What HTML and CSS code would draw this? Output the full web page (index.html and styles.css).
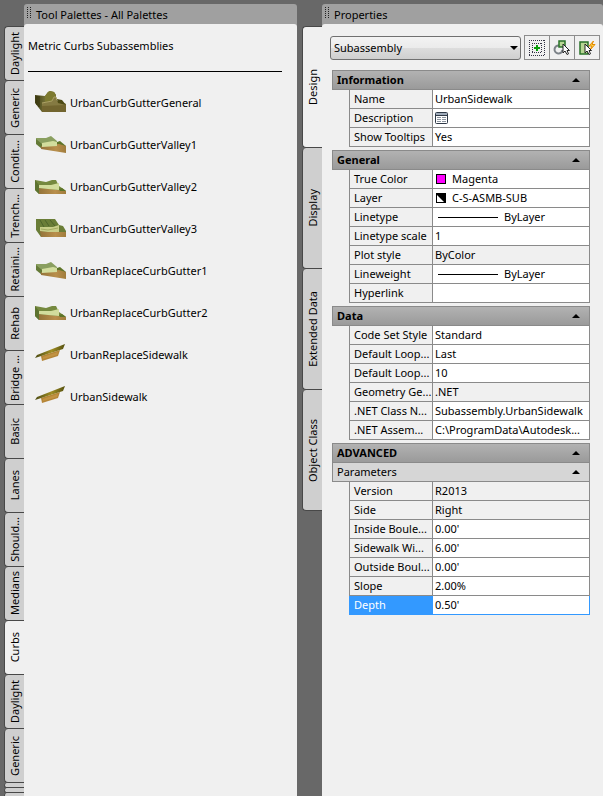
FILE: index.html
```html
<!DOCTYPE html>
<html lang="en">
<head>
<meta charset="utf-8">
<title>Tool Palettes and Properties</title>
<link rel="stylesheet" href="styles.css">
</head>
<body>
<svg class="defs" aria-hidden="true">
  <defs>
    <linearGradient id="olive" x1="0" y1="0" x2="1" y2="0"><stop offset="0" stop-color="#3f3d12"/><stop offset=".35" stop-color="#77743a"/><stop offset="1" stop-color="#5c5822"/></linearGradient>
    <linearGradient id="slab" x1="0" y1="0" x2="1" y2="0"><stop offset="0" stop-color="#4a4a12"/><stop offset=".55" stop-color="#a18e24"/><stop offset="1" stop-color="#54500f"/></linearGradient>
    <linearGradient id="earth" x1="0" y1="0" x2="1" y2="0"><stop offset="0" stop-color="#94743a"/><stop offset=".6" stop-color="#b98f4c"/><stop offset="1" stop-color="#a07c3c"/></linearGradient>
    <symbol id="general" viewBox="0 0 32 24">
      <path d="M0 4l10 1 3-4 2-1 4 1 2 3v5l10 4v8H7l-7-9z" fill="url(#olive)"/>
      <path d="M10 5l3-4 2-1 4 1 2 3-1 2-3 4-7 1z" fill="#7d7a30"/>
      <path d="M2 5v9M4 5v11" stroke="#35330c"/>
      <path d="M7 12l10-2 2-4h2l1 4 9 3v8H7z" fill="#857a42"/>
      <path d="M7 12l10-2 2-4h2l1 3" fill="none" stroke="#aaa064"/>
      <path d="M22 8l5 1 4 5-8-2z" fill="#4d4a15"/>
      <path d="M7 15l24-1v7H7z" fill="#72652f"/>
    </symbol>
    <symbol id="valley1" viewBox="0 0 32 24">
      <path d="M1 5l10 0 5-2 6 5v3L7 12 1 11z" fill="#8a9f60"/>
      <path d="M1 6l6 5v5l-6-5z" fill="#647a37"/>
      <path d="M22 9l3-1 6 5h-9z" fill="#5d7428"/>
      <path d="M6 13l18-2 7 2v7L6 16z" fill="url(#earth)"/>
      <path d="M7 10l11-2 4 1v4L7 14z" fill="#d2dd9d"/>
    </symbol>
    <symbol id="valley2" viewBox="0 0 32 24">
      <path d="M0 5l11 2 6-2h4l3 6 3 2 4 3v3H4l-4-4z" fill="#75893f"/>
      <path d="M0 5l4 5v9l-4-4z" fill="#5d7330"/>
      <path d="M4 13l10 1 17 2v3H4z" fill="url(#earth)"/>
      <path d="M4 10l12 0 8-2v7l-11-1-9-1z" fill="#d2dd9d"/>
      <path d="M24 14l3-1 4 3h-6z" fill="#5d7428"/>
    </symbol>
    <symbol id="valley3" viewBox="0 0 32 24">
      <path d="M1 2h19l4 6 4 1 3 5v6H6l-5-7z" fill="#6a7d37"/>
      <path d="M5 3l4 7M10 3l4 6M15 3l5 6" stroke="#4e632a"/>
      <path d="M5 14l10 1 16 0v5H6z" fill="url(#earth)"/>
      <path d="M5 10l13 0 6-2v7H13l-8-1z" fill="#c8ce88"/>
      <path d="M6 12l7 1 10-2" fill="none" stroke="#a2aa60"/>
    </symbol>
    <symbol id="walk" viewBox="0 0 32 24">
      <path d="M6 13l19-6-2 6-16 5z" fill="#b58537"/>
      <path d="M8 14l15-5-1 3-14 4z" fill="#c29342"/>
      <path d="M2 12L30 1l-2 5L0 15z" fill="url(#slab)"/>
    </symbol>
    <symbol id="grip" viewBox="0 0 4 12">
      <path d="M.5 0v12M3.500 0v12" stroke="#222" stroke-dasharray="1 1" shape-rendering="crispEdges"/>
    </symbol>
    <symbol id="cursor" viewBox="0 0 8 12">
      <path d="M1 1v9l2-2 2 3.500 1.500-.7L5 7.500h2.500z" fill="#fff" stroke="#222"/>
    </symbol>
  </defs>
</svg>
<div class="workspace">
  <nav class="tabs tabs-left" aria-label="Palettes">
    <button class="tab">Daylight</button>
    <button class="tab">Generic</button>
    <button class="tab">Condit...</button>
    <button class="tab">Trench...</button>
    <button class="tab">Retaini...</button>
    <button class="tab">Rehab</button>
    <button class="tab">Bridge ...</button>
    <button class="tab">Basic</button>
    <button class="tab">Lanes</button>
    <button class="tab">Should...</button>
    <button class="tab">Medians</button>
    <button class="tab active">Curbs</button>
    <button class="tab">Daylight</button>
    <button class="tab">Generic</button>
    <span class="stub"></span>
    <span class="stub"></span>
    <span class="stub"></span>
  </nav>
  <section class="panel palette">
    <header class="titlebar"><svg class="grip"><use href="#grip"/></svg>Tool Palettes - All Palettes</header>
    <div class="content">
      <h2 class="palette-name">Metric Curbs Subassemblies</h2>
      <ul class="tools">
        <li><svg class="thumb"><use href="#general"/></svg>UrbanCurbGutterGeneral</li>
        <li><svg class="thumb"><use href="#valley1"/></svg>UrbanCurbGutterValley1</li>
        <li><svg class="thumb"><use href="#valley2"/></svg>UrbanCurbGutterValley2</li>
        <li><svg class="thumb"><use href="#valley3"/></svg>UrbanCurbGutterValley3</li>
        <li><svg class="thumb"><use href="#valley1"/></svg>UrbanReplaceCurbGutter1</li>
        <li><svg class="thumb"><use href="#valley2"/></svg>UrbanReplaceCurbGutter2</li>
        <li><svg class="thumb"><use href="#walk"/></svg>UrbanReplaceSidewalk</li>
        <li><svg class="thumb"><use href="#walk"/></svg>UrbanSidewalk</li>
      </ul>
    </div>
  </section>
  <nav class="tabs tabs-right" aria-label="Property pages">
    <button class="tab active">Design</button>
    <button class="tab">Display</button>
    <button class="tab">Extended Data</button>
    <button class="tab">Object Class</button>
  </nav>
  <section class="panel properties">
    <header class="titlebar"><svg class="grip"><use href="#grip"/></svg>Properties</header>
    <div class="content">
      <div class="toolbar">
        <div class="picker">
          <select aria-label="Object type"><option>Subassembly</option></select>
          <svg class="caret" viewBox="0 0 8 4"><path d="M0 0h8L4 4z"/></svg>
        </div>
        <div class="actions">
          <button aria-label="Toggle pick add">
            <svg viewBox="0 0 18 18"><g fill="none" stroke="#334" stroke-dasharray="1 1" shape-rendering="crispEdges"><path d="M1 1.500h16M1 16.500h16M1.500 1v16M16.500 1v16M4 4.500h10M4 13.500h10M4.500 4v10M13.500 4v10"/></g><path d="M8 6h2v2h2v2h-2v2H8v-2H6V8h2z" fill="#0a9c0a"/></svg>
          </button>
          <button aria-label="Select objects">
            <svg viewBox="0 0 18 18"><path d="M6 6.500a4 4 0 1 0 3.500 4.500" fill="none" stroke="#7c8288" stroke-width="2"/><path d="M6 2h6v6H6z" fill="#b8d794" stroke="#287228" stroke-width="1.500"/><use href="#cursor" x="9" y="4" width="8" height="12"/></svg>
          </button>
          <button aria-label="Quick select">
            <svg viewBox="0 0 18 18"><path d="M2 3h8v12H2z" fill="#b8d794" stroke="#287228" stroke-width="1.500"/><path d="M15.500 2l-4.500 5h3l-2 4 5-5.500h-3z" fill="#ffd84c" stroke="#e58b00"/><use href="#cursor" x="6" y="4" width="8" height="12"/></svg>
          </button>
        </div>
      </div>
      <section class="group">
        <button class="group-head">Information<svg class="fold" viewBox="0 0 8 4"><path d="M0 4h8L4 0z"/></svg></button>
        <table>
          <tr><th scope="row">Name</th><td>UrbanSidewalk</td></tr>
          <tr><th scope="row">Description</th><td><svg class="sheet" viewBox="0 0 13 12"><rect x=".5" y=".5" width="12" height="11" rx="1" fill="#fff" stroke="#2f3947"/><path d="M1 1h11v2H1z" fill="#9fabba"/><path d="M1 3.500h11" stroke="#2f3947"/><path d="M2 5.500h4M7 5.500h4M2 7.500h4M7 7.500h4M2 9.500h4M7 9.500h4" stroke="#8b949f"/></svg></td></tr>
          <tr><th scope="row">Show Tooltips</th><td>Yes</td></tr>
        </table>
      </section>
      <section class="group">
        <button class="group-head">General<svg class="fold" viewBox="0 0 8 4"><path d="M0 4h8L4 0z"/></svg></button>
        <table>
          <tr><th scope="row">True Color</th><td><div class="value"><svg class="swatch" viewBox="0 0 10 10"><rect x=".5" y=".5" width="9" height="9" fill="#f0f" stroke="#000"/></svg>Magenta</div></td></tr>
          <tr><th scope="row">Layer</th><td><div class="value"><svg class="swatch" viewBox="0 0 10 10"><path d="M0 0h10v10H0z"/><path d="M1 2v7h7z" fill="#fff"/></svg>C-S-ASMB-SUB</div></td></tr>
          <tr><th scope="row">Linetype</th><td><div class="value"><span class="stroke"></span>ByLayer</div></td></tr>
          <tr><th scope="row">Linetype scale</th><td>1</td></tr>
          <tr class="readonly"><th scope="row">Plot style</th><td>ByColor</td></tr>
          <tr><th scope="row">Lineweight</th><td><div class="value"><span class="stroke"></span>ByLayer</div></td></tr>
          <tr><th scope="row">Hyperlink</th><td></td></tr>
        </table>
      </section>
      <section class="group">
        <button class="group-head">Data<svg class="fold" viewBox="0 0 8 4"><path d="M0 4h8L4 0z"/></svg></button>
        <table>
          <tr><th scope="row">Code Set Style</th><td>Standard</td></tr>
          <tr><th scope="row">Default Loop...</th><td>Last</td></tr>
          <tr><th scope="row">Default Loop...</th><td>10</td></tr>
          <tr class="readonly"><th scope="row">Geometry Ge...</th><td>.NET</td></tr>
          <tr><th scope="row">.NET Class N...</th><td>Subassembly.UrbanSidewalk</td></tr>
          <tr><th scope="row">.NET Assem...</th><td>C:\ProgramData\Autodesk...</td></tr>
        </table>
      </section>
      <section class="group">
        <button class="group-head">ADVANCED<svg class="fold" viewBox="0 0 8 4"><path d="M0 4h8L4 0z"/></svg></button>
        <button class="group-head sub">Parameters<svg class="fold" viewBox="0 0 8 4"><path d="M0 4h8L4 0z"/></svg></button>
        <table>
          <tr class="readonly"><th scope="row">Version</th><td>R2013</td></tr>
          <tr class="readonly"><th scope="row">Side</th><td>Right</td></tr>
          <tr><th scope="row">Inside Boule...</th><td>0.00'</td></tr>
          <tr><th scope="row">Sidewalk Wi...</th><td>6.00'</td></tr>
          <tr><th scope="row">Outside Boul...</th><td>0.00'</td></tr>
          <tr><th scope="row">Slope</th><td>2.00%</td></tr>
          <tr class="selected"><th scope="row">Depth</th><td>0.50'</td></tr>
        </table>
      </section>
    </div>
  </section>
</div>
</body>
</html>
```
FILE: styles.css
```css
* { box-sizing: border-box; }

body {
  margin: 0;
  background: #686868;
  color: #000;
  font: 11px/16px "Noto Sans", "Open Sans", sans-serif;
}

button, select { font: inherit; color: inherit; }

svg { display: block; flex: none; }

.defs { position: absolute; width: 0; height: 0; }

.workspace {
  display: grid;
  grid-template-columns: 20px 278fr 20px 281fr;
  height: 100vh;
  padding: 4px 0 0 4px;
  overflow: hidden;
}

.panel {
  display: flex;
  flex-direction: column;
  min-width: 0;
  background: #a0a0a0;
  border-radius: 3px 3px 0 0;
}

.palette { margin-right: 5px; }

.titlebar {
  display: flex;
  align-items: center;
  height: 20px;
  padding: 2px 3px 0;
  gap: 5px;
}

.grip { width: 4px; height: 12px; margin-top: -4px; }

.content {
  flex: 1;
  background: #f0f0f0;
  border-radius: 3px 3px 0 0;
}

/* Vertical tab strips */
.tabs {
  display: flex;
  flex-direction: column;
  padding-top: 22px;
  overflow: hidden;
}

.tab, .stub {
  flex: none;
  width: 20px;
  padding: 0;
  background: #cfcfcf;
  border: 0 solid #484848;
  border-width: 0 0 1px 1px;
  border-radius: 4px 0 0 4px;
}

.tab {
  height: 54px;
  display: flex;
  align-items: center;
  justify-content: center;
  writing-mode: sideways-lr;
  white-space: nowrap;
}

.tabs-left .tab:first-child { height: 55px; border-top-width: 1px; }
.stub { height: 5px; }
.tabs-right .tab { height: 121px; }
.tabs-right .tab:first-child { height: 122px; border-top-width: 1px; }
.tab.active { background: #f0f0f0; }

/* Tool palette */
.palette-name {
  margin: 0 15px 0 4px;
  padding: 14px 0 17px;
  border-bottom: 1px solid #000;
  font-size: 11px;
  font-weight: 400;
}

.tools { margin: 10px 0 0; padding: 0 11px; list-style: none; }

.tools li { display: flex; align-items: center; gap: 3px; height: 42px; }

.thumb { width: 32px; height: 24px; }

/* Properties */
.properties .content { padding: 11px 3px 0 8px; }

.toolbar { display: flex; align-items: center; gap: 3px; height: 25px; margin-bottom: 10px; }

.picker { position: relative; flex: 1; height: 24px; }

.picker select {
  appearance: none;
  width: 100%;
  height: 100%;
  padding: 0 3px;
  border: 1px solid #707070;
  border-radius: 3px;
  background: linear-gradient(#f3f3f3, #ebebeb 50%, #dddddd 50%, #cfcfcf);
}

.caret { position: absolute; right: 3px; top: 10px; width: 8px; height: 4px; }

.actions { display: flex; border: 1px solid #8d8d8d; height: 25px; }

.actions button {
  display: grid;
  place-items: center;
  width: 25px;
  padding: 0;
  border: 0;
  background: #f0f0f0;
}

.actions button:first-child { width: 24px; }

.actions button + button { border-left: 1px solid #8d8d8d; }

.actions svg { width: 18px; height: 18px; }

.group { margin: 0 10px 3px 2px; }

.group-head {
  display: flex;
  align-items: center;
  justify-content: space-between;
  width: 100%;
  height: 20px;
  padding: 0 9px 0 4px;
  border: 1px solid #8a8a8a;
  background: linear-gradient(#b2b2b2, #9a9a9a);
  font-weight: 700;
}

.group-head.sub { height: 19px; border-top: 0; background: #d6d6d6; font-weight: 400; }

.fold { width: 8px; height: 4px; }

table {
  width: calc(100% - 17px);
  margin-left: 17px;
  table-layout: fixed;
  border-spacing: 0;
}

th, td {
  height: 19px;
  padding: 0 0 0 4px;
  border: 0 solid #8a8a8a;
  border-width: 0 0 1px 1px;
  line-height: 18px;
  text-align: left;
  white-space: nowrap;
  overflow: hidden;
}

th { width: 83px; font-weight: 400; }

td { padding-left: 2px; border-right-width: 1px; background: #fff; }

.readonly td { background: #f0f0f0; }

.selected th { background: #3399ff; color: #fff; border-color: #3399ff; }

.selected td { border-color: #3399ff; }

.value { display: flex; align-items: center; gap: 6px; padding-left: 1px; }

.swatch { width: 10px; height: 10px; }

.stroke { width: 60px; height: 1px; margin-left: 2px; background: #000; }

.sheet { width: 13px; height: 12px; }
```
